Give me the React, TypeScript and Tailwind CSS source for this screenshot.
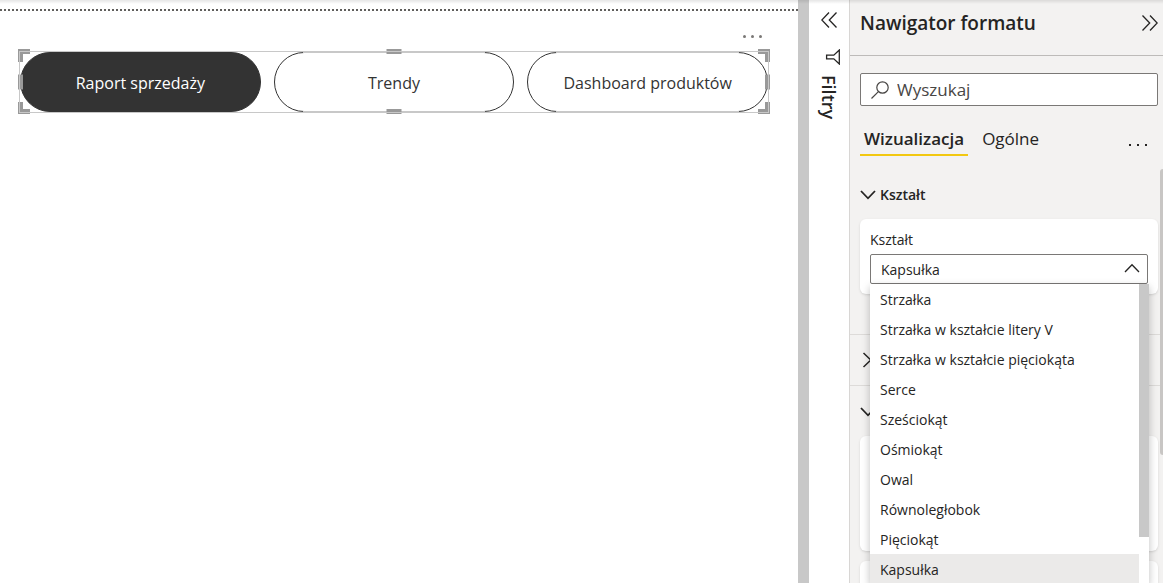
import React, { useState } from 'react';

const PAGES = ['Raport sprzedaży', 'Trendy', 'Dashboard produktów'];

const SHAPES = [
  'Strzałka',
  'Strzałka w kształcie litery V',
  'Strzałka w kształcie pięciokąta',
  'Serce',
  'Sześciokąt',
  'Ośmiokąt',
  'Owal',
  'Równoległobok',
  'Pięciokąt',
  'Kapsułka',
];

const TABS = ['Wizualizacja', 'Ogólne'];

type ChevronProps = { d: string; className: string; box: string; stroke?: number };

const Chevron: React.FC<ChevronProps> = ({ d, className, box, stroke = 1.3 }) => (
  <svg viewBox={box} className={className} fill="none" stroke="#252423" strokeWidth={stroke} aria-hidden="true">
    <path d={d} />
  </svg>
);

// Resize grips drawn over the selected visual
const SelectionFrame: React.FC = () => (
  <div className="pointer-events-none absolute inset-0">
    <span className="absolute -left-px -top-0.5 h-[13px] w-3 border-l-[5px] border-t-[5px] border-[#999]" />
    <span className="absolute -right-px -top-0.5 h-[13px] w-3 border-r-[5px] border-t-[5px] border-[#999]" />
    <span className="absolute -bottom-px -left-px h-3 w-3 border-b-[5px] border-l-[5px] border-[#999]" />
    <span className="absolute -bottom-px -right-px h-3 w-3 border-b-[5px] border-r-[5px] border-[#999]" />
    <span className="absolute -top-0.5 left-1/2 h-[5px] w-[15px] -translate-x-1/2 bg-[#999]" />
    <span className="absolute -bottom-px left-1/2 h-[5px] w-[15px] -translate-x-1/2 bg-[#999]" />
    <span className="absolute -left-px top-1/2 h-[15px] w-[5px] -translate-y-1/2 bg-[#999]" />
    <span className="absolute -right-px top-1/2 h-[15px] w-[5px] -translate-y-1/2 bg-[#999]" />
    <span className="absolute inset-0 border border-[#c8c8c8]" />
  </div>
);

const Canvas: React.FC = () => {
  const [page, setPage] = useState(PAGES[0]);

  return (
    <main className="min-w-0 flex-1 bg-white pt-[9px]">
      <div className="h-0.5 bg-[repeating-linear-gradient(90deg,#605e5c_0_2px,transparent_2px_4px)]" />
      <div className="pl-[19px] pr-[29px]">
        <div className="flex h-10 items-center justify-end pr-[7px] pt-2.5">
          <button aria-label="Więcej opcji" className="flex gap-[5px]">
            <span className="h-[3px] w-[3px] rounded-full bg-[#7a7876]" />
            <span className="h-[3px] w-[3px] rounded-full bg-[#7a7876]" />
            <span className="h-[3px] w-[3px] rounded-full bg-[#7a7876]" />
          </button>
        </div>
        <div className="relative">
          <nav className="grid grid-cols-3 gap-[13px] p-px">
            {PAGES.map((name) => (
              <button
                key={name}
                onClick={() => setPage(name)}
                className={`relative h-[60px] rounded-full border border-[#333] pt-0.5 text-base ${
                  page === name ? 'bg-[#333] text-white' : 'bg-white text-[#333]'
                }`}
              >
                {page !== name && (
                  <span className="absolute -inset-y-px inset-x-7 border-y border-[#c8c8c8]" />
                )}
                {name}
              </button>
            ))}
          </nav>
          <SelectionFrame />
        </div>
      </div>
    </main>
  );
};

const FilterRail: React.FC = () => (
  <aside className="flex w-10 shrink-0 flex-col items-center bg-white pt-3">
    <button aria-label="Rozwiń filtry">
      <Chevron box="0 0 16 16" className="h-4 w-4" d="M8 .5.8 8 8 15.5M15.5.5 8.3 8l7.2 7.5" />
    </button>
    <svg viewBox="0 0 16 16" className="ml-[7px] mt-[21px] h-4 w-4" fill="none" stroke="#252423" strokeWidth="1.3" aria-hidden="true">
      <path d="M14.3 1v14L8.8 9.8H1.6V6.2h7.2z" />
    </svg>
    <h2 className="mt-2.5 text-lg font-semibold leading-5 text-[#252423] [writing-mode:vertical-rl]">Filtry</h2>
  </aside>
);

const ShapeSelect: React.FC = () => {
  const [shape, setShape] = useState('Kapsułka');

  return (
    <div className="relative">
      <select
        id="shape"
        value={shape}
        onChange={(e) => setShape(e.target.value)}
        className="block h-[30px] w-full appearance-none rounded-xs border border-[#7a7876] bg-white pl-2.5 pt-0.5 text-sm text-[#252423]"
      >
        {SHAPES.map((s) => (
          <option key={s}>{s}</option>
        ))}
      </select>
      <Chevron
        box="0 0 16 10"
        className="pointer-events-none absolute right-2 top-[9px] h-2.5 w-4"
        d="M1 9l7-7.3L15 9"
      />
      <div className="absolute left-0 top-full z-10 w-[calc(100%+1px)] bg-white shadow-[0_3px_8px_rgba(0,0,0,0.25)]">
        <ul role="listbox" aria-label="Kształt" className="mr-2.5">
          {SHAPES.map((s) => (
            <li
              key={s}
              role="option"
              aria-selected={s === shape}
              onClick={() => setShape(s)}
              className={`h-[30px] pl-2.5 text-sm leading-8 ${s === shape ? 'bg-[#ebeae9]' : ''}`}
            >
              {s}
            </li>
          ))}
        </ul>
        <span className="absolute right-0 top-0 h-[253px] w-2.5 bg-[#c8c8c8]" />
      </div>
    </div>
  );
};

const FormatPane: React.FC = () => {
  const [tab, setTab] = useState(TABS[0]);

  return (
    <aside className="relative w-[314px] shrink-0 border-l border-[#d8d6d4] bg-[#f3f2f1] text-[#252423]">
      <header className="flex h-14 items-start justify-between border-b border-[#bdbbb9] pl-2.5 pr-[5px] pt-2.5">
        <h1 className="text-[19px] font-semibold leading-[26px]">Nawigator formatu</h1>
        <button aria-label="Zwiń okienko" className="pt-[5px]">
          <Chevron box="0 0 16 16" className="h-4 w-4" d="M.5.5 7.7 8 .5 15.5M8 .5 15.2 8 8 15.5" />
        </button>
      </header>

      <div className="pl-2.5 pr-[5px] pt-[17px]">
        <label className="flex h-[33px] items-center gap-2 rounded-xs border border-[#7a7876] bg-white pl-2.5">
          <svg viewBox="0 0 18 18" className="h-[18px] w-[18px]" fill="none" stroke="#484644" strokeWidth="1.2" aria-hidden="true">
            <circle cx="11.5" cy="6.5" r="5.7" />
            <path d="M7.4 10.6.5 17.5" />
          </svg>
          <input
            type="search"
            aria-label="Wyszukaj"
            placeholder="Wyszukaj"
            className="min-w-0 flex-1 bg-transparent pt-px text-[17px] outline-none placeholder:text-[#484644]"
          />
        </label>

        <div className="mt-[18px] flex items-start">
          {TABS.map((t) => (
            <button
              key={t}
              onClick={() => setTab(t)}
              className={`h-8 border-b-2 px-1 text-[17px] leading-[30px] ${
                t === tab ? 'border-[#f2c811] font-semibold' : 'ml-2.5 border-transparent'
              }`}
            >
              {t}
            </button>
          ))}
          <button aria-label="Więcej" className="ml-auto flex gap-[6px] pr-[11px] pt-5">
            <span className="h-0.5 w-0.5 bg-[#252423]" />
            <span className="h-0.5 w-0.5 bg-[#252423]" />
            <span className="h-0.5 w-0.5 bg-[#252423]" />
          </button>
        </div>
      </div>

      <section className="border-b border-[#dddbd9] pb-10 pl-2.5 pr-[5px] pt-[29px]">
        <button aria-expanded="true" className="flex h-5 items-center gap-1 text-sm font-semibold">
          <Chevron box="0 0 16 10" className="h-2.5 w-4" stroke={1.8} d="M1 1l7 7.3L15 1" />
          Kształt
        </button>
        <div className="mt-3.5 rounded-md bg-white px-2.5 pb-2.5 pt-[11px] shadow">
          <label htmlFor="shape" className="mb-1 block text-sm leading-5">Kształt</label>
          <ShapeSelect />
        </div>
      </section>

      <section className="flex h-[51px] items-center border-b border-[#dddbd9] pl-3">
        <button aria-label="Rozwiń sekcję" aria-expanded="false">
          <Chevron box="0 0 10 16" className="h-4 w-2.5" stroke={1.5} d="M1.5 1l7.3 7-7.3 7" />
        </button>
      </section>

      <section className="pl-2.5 pr-[5px] pt-5">
        <button aria-label="Zwiń sekcję" aria-expanded="true" className="flex h-3 items-center">
          <Chevron box="0 0 16 10" className="h-2.5 w-4" stroke={1.8} d="M1 1l7 7.3L15 1" />
        </button>
        <div className="mt-[18px] h-[115px] rounded-md bg-white shadow" />
        <div className="mt-2.5 h-[115px] rounded-md bg-white shadow" />
      </section>

      <span className="absolute right-0 top-[169px] h-[286px] w-[3px] rounded-l-full bg-[#c8c6c4]" />
    </aside>
  );
};

const App: React.FC = () => (
  <div className="relative flex h-screen overflow-hidden bg-white font-['Open_Sans','Noto_Sans',sans-serif]">
    <Canvas />
    <div className="w-[11px] shrink-0 bg-[#c8c8c8]" />
    <FilterRail />
    <FormatPane />
    <div className="pointer-events-none absolute inset-x-0 top-0 h-1 bg-linear-to-b from-black/10 to-transparent" />
  </div>
);

export default App;
